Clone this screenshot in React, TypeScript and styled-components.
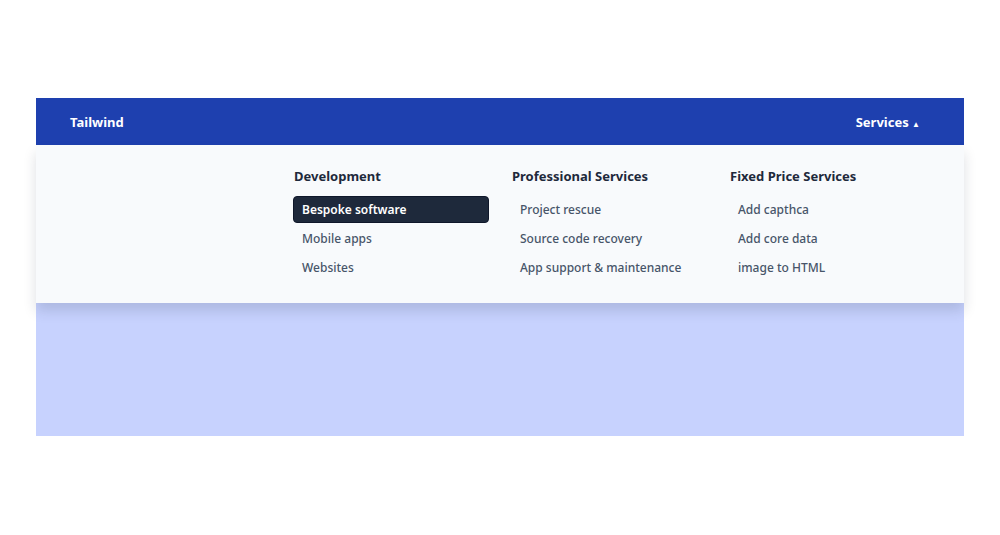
import React from "react";
import styled, { createGlobalStyle } from "styled-components";

const Global = createGlobalStyle`
  body { margin: 0; background: #fff; font-family: "Noto Sans", "Open Sans", sans-serif; }
`;
const Frame = styled.div`
  width: 928px; margin: 98px auto 0; background: #c7d2fe; height: 338px; position: relative;
`;
const Nav = styled.nav`
  height: 47px; background: #1e40af; display: flex; align-items: center; justify-content: space-between;
  padding: 0 44px 0 34px; color: #fff; font-weight: 700; font-size: 13px;
`;
const Drop = styled.div`
  background: #f8fafc; height: 158px; display: grid; grid-template-columns: repeat(3, 196px);
  column-gap: 22px; padding: 22px 0 0 257px; box-sizing: border-box;
  box-shadow: 0 8px 12px rgba(30, 41, 59, 0.15);
`;
const Col = styled.div` display: flex; flex-direction: column; gap: 2px; `;
const Head = styled.div` font-weight: 700; font-size: 13px; color: #1e293b; margin: 0 0 9px 1px; line-height: 18px; `;
const Item = styled.div<{ $active?: boolean }>`
  font-size: 12px; line-height: 25px; padding: 0 8px; border-radius: 4px;
  color: ${p => (p.$active ? "#fff" : "#475569")};
  background: ${p => (p.$active ? "#1e293b" : "transparent")};
  font-weight: ${p => (p.$active ? 600 : 500)};
  border: 1px solid ${p => (p.$active ? "#0f172a" : "transparent")};
`;

const cols = [
  ["Development", ["Bespoke software", "Mobile apps", "Websites"]],
  ["Professional Services", ["Project rescue", "Source code recovery", "App support & maintenance"]],
  ["Fixed Price Services", ["Add capthca", "Add core data", "image to HTML"]],
] as const;

export default function App() {
  return (
    <>
      <Global />
      <Frame>
        <Nav>
          <span>Tailwind</span>
          <span>Services <span style={{ fontSize: 8 }}>▲</span></span>
        </Nav>
        <Drop>
          {cols.map(([h, items], ci) => (
            <Col key={h}>
              <Head>{h}</Head>
              {items.map((it, i) => (
                <Item key={it} $active={ci === 0 && i === 0}>{it}</Item>
              ))}
            </Col>
          ))}
        </Drop>
      </Frame>
    </>
  );
}
